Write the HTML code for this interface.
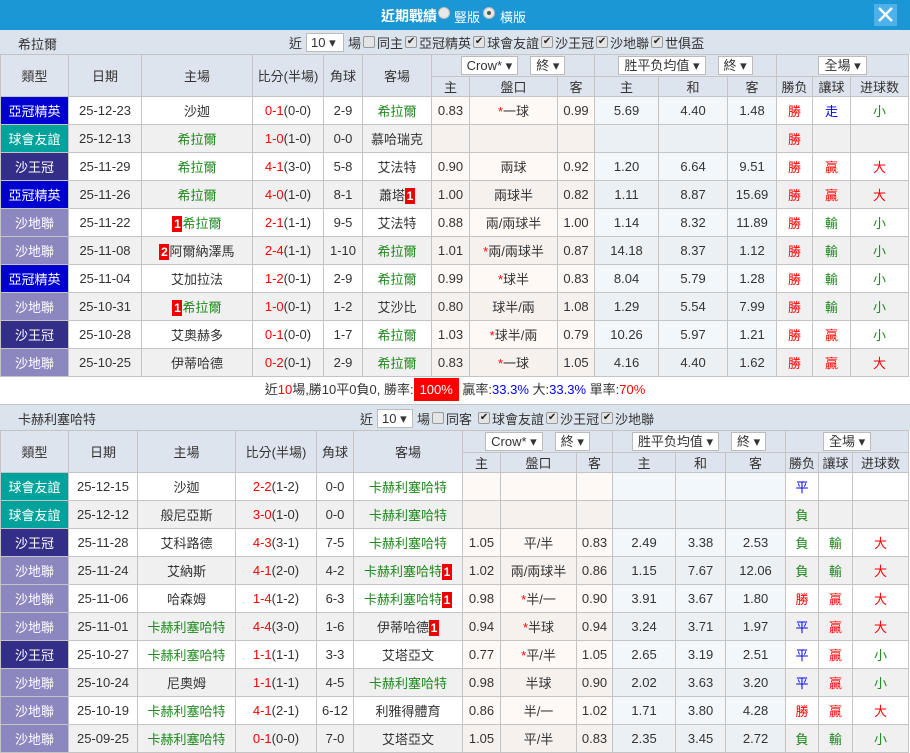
<!DOCTYPE html>
<html><head><meta charset="utf-8"><style>
*{box-sizing:border-box;margin:0;padding:0}
body{width:910px;height:753px;overflow:hidden;background:#fff;font-family:"Liberation Sans","Noto Sans CJK TC",sans-serif;font-size:13px;color:#333;position:relative}
.top{position:absolute;left:0;top:0;width:910px;height:30px;background:#1b97d5;color:#fff}
.top .t{position:absolute;left:381px;top:6px;font-size:14px;font-weight:bold}
.top .r{position:absolute;top:7px;width:12px;height:12px;border-radius:50%;background:#e8e8e8;border:1px solid #bbb}
.top .r.on::after{content:"";position:absolute;left:3px;top:3px;width:4px;height:4px;border-radius:50%;background:#555}
.top .l{position:absolute;top:7px;font-size:13px}
.close{position:absolute;left:874px;top:4px;width:23px;height:22px;background:#4fb1e9}
.sec{position:absolute;left:0;width:910px;height:24px;background:#dbe3ec}
.sec .n{position:absolute;left:18px;top:4px;font-size:13px}
.ctl{position:absolute;top:2px;white-space:nowrap;font-size:13px;display:flex;align-items:center;height:20px}
.sel{display:inline-block;background:#fff;border:1px solid #bbb;height:19px;line-height:17px;padding:0 4px;font-size:13px;margin:0 4px}
.cb{display:inline-block;width:12px;height:12px;border:1px solid #999;border-radius:2px;background:#e4e4e4;margin:0 2px;vertical-align:middle;font-size:10px;line-height:10px;text-align:center;color:#222}
table{position:absolute;left:0;border-collapse:collapse;table-layout:fixed;width:909px}
td{border:1px solid #c4c4c4;text-align:center;height:28px;padding:0;white-space:nowrap;overflow:hidden;font-size:13px}
thead td{background:#dde4ed;height:auto}
tr.h1 td{height:22px}tr.h2 td{height:18px}
tbody tr:nth-child(even) td{background:#f0f0f0}
tbody tr td.o{background:#fff9f6}tbody tr td.x{background:#f1f7fb}
tbody tr:nth-child(even) td.o{background:#f7f1ee}tbody tr:nth-child(even) td.x{background:#eaf0f4}
td.A{background:#0000d0!important;color:#fff}
td.F{background:#00a39b!important;color:#fff}
td.K{background:#332e88!important;color:#fff}
td.L{background:#8d87bf!important;color:#fff}
.g{color:#1e8a1e}.rd{color:#f00}.b{color:#00f}.s{color:#f00}
.bd{display:inline-block;background:#e00;color:#fff;font-weight:bold;width:10px;height:16px;line-height:16px;font-size:12px;vertical-align:middle;text-align:center}
.hs{display:inline-block;background:#fff;border:1px solid #bbb;height:19px;line-height:17px;padding:0 5px;margin:0 6px}
.sum{position:absolute;left:0;top:376px;width:910px;height:28px;text-align:center;line-height:28px;font-size:13px}
</style></head><body>
<div class="top"><span class="t">近期戰績</span><span class="r" style="left:438px"></span><span class="l" style="left:454px">豎版</span><span class="r on" style="left:483px"></span><span class="l" style="left:500px">橫版</span>
<div class="close"><svg width="23" height="22"><path d="M5 4L18 17M18 4L5 17" stroke="#fff" stroke-width="2.4"/></svg></div></div>

<div class="sec" style="top:30px"><span class="n">希拉爾</span>
<div class="ctl" style="left:289px">近<span class="sel" style="width:38px">10 ▾</span>場<span class="cb"></span>同主<span class="cb">✔</span>亞冠精英<span class="cb">✔</span>球會友誼<span class="cb">✔</span>沙王冠<span class="cb">✔</span>沙地聯<span class="cb">✔</span>世俱盃</div></div>

<table style="top:54px">
<colgroup><col style="width:68px"><col style="width:73px"><col style="width:111px"><col style="width:71px"><col style="width:39px"><col style="width:69px"><col style="width:38px"><col style="width:88px"><col style="width:37px"><col style="width:64px"><col style="width:69px"><col style="width:49px"><col style="width:36px"><col style="width:38px"><col style="width:58px"></colgroup>
<thead><tr class="h1"><td rowspan="2">類型</td><td rowspan="2">日期</td><td rowspan="2">主場</td><td rowspan="2">比分(半場)</td><td rowspan="2">角球</td><td rowspan="2">客場</td><td colspan="3"><span class="hs">Crow* ▾</span><span class="hs">終 ▾</span></td><td colspan="3"><span class="hs">胜平负均值 ▾</span><span class="hs">終 ▾</span></td><td colspan="3"><span class="hs">全場 ▾</span></td></tr>
<tr class="h2"><td>主</td><td>盤口</td><td>客</td><td>主</td><td>和</td><td>客</td><td>勝负</td><td>讓球</td><td>进球数</td></tr></thead>
<tbody>
<tr><td class="A">亞冠精英</td><td>25-12-23</td><td>沙迦</td><td><span class="rd">0-1</span>(0-0)</td><td>2-9</td><td class="g">希拉爾</td><td class="o">0.83</td><td class="o"><span class="s">*</span>一球</td><td class="o">0.99</td><td class="x">5.69</td><td class="x">4.40</td><td class="x">1.48</td><td class="rd">勝</td><td class="b">走</td><td class="g">小</td></tr>
<tr><td class="F">球會友誼</td><td>25-12-13</td><td class="g">希拉爾</td><td><span class="rd">1-0</span>(1-0)</td><td>0-0</td><td>慕哈瑞克</td><td class="o"></td><td class="o"></td><td class="o"></td><td class="x"></td><td class="x"></td><td class="x"></td><td class="rd">勝</td><td></td><td></td></tr>
<tr><td class="K">沙王冠</td><td>25-11-29</td><td class="g">希拉爾</td><td><span class="rd">4-1</span>(3-0)</td><td>5-8</td><td>艾法特</td><td class="o">0.90</td><td class="o">兩球</td><td class="o">0.92</td><td class="x">1.20</td><td class="x">6.64</td><td class="x">9.51</td><td class="rd">勝</td><td class="rd">贏</td><td class="rd">大</td></tr>
<tr><td class="A">亞冠精英</td><td>25-11-26</td><td class="g">希拉爾</td><td><span class="rd">4-0</span>(1-0)</td><td>8-1</td><td>蕭塔<span class="bd">1</span></td><td class="o">1.00</td><td class="o">兩球半</td><td class="o">0.82</td><td class="x">1.11</td><td class="x">8.87</td><td class="x">15.69</td><td class="rd">勝</td><td class="rd">贏</td><td class="rd">大</td></tr>
<tr><td class="L">沙地聯</td><td>25-11-22</td><td><span class="bd">1</span><span class="g">希拉爾</span></td><td><span class="rd">2-1</span>(1-1)</td><td>9-5</td><td>艾法特</td><td class="o">0.88</td><td class="o">兩/兩球半</td><td class="o">1.00</td><td class="x">1.14</td><td class="x">8.32</td><td class="x">11.89</td><td class="rd">勝</td><td class="g">輸</td><td class="g">小</td></tr>
<tr><td class="L">沙地聯</td><td>25-11-08</td><td><span class="bd">2</span>阿爾納澤馬</td><td><span class="rd">2-4</span>(1-1)</td><td>1-10</td><td class="g">希拉爾</td><td class="o">1.01</td><td class="o"><span class="s">*</span>兩/兩球半</td><td class="o">0.87</td><td class="x">14.18</td><td class="x">8.37</td><td class="x">1.12</td><td class="rd">勝</td><td class="g">輸</td><td class="g">小</td></tr>
<tr><td class="A">亞冠精英</td><td>25-11-04</td><td>艾加拉法</td><td><span class="rd">1-2</span>(0-1)</td><td>2-9</td><td class="g">希拉爾</td><td class="o">0.99</td><td class="o"><span class="s">*</span>球半</td><td class="o">0.83</td><td class="x">8.04</td><td class="x">5.79</td><td class="x">1.28</td><td class="rd">勝</td><td class="g">輸</td><td class="g">小</td></tr>
<tr><td class="L">沙地聯</td><td>25-10-31</td><td><span class="bd">1</span><span class="g">希拉爾</span></td><td><span class="rd">1-0</span>(0-1)</td><td>1-2</td><td>艾沙比</td><td class="o">0.80</td><td class="o">球半/兩</td><td class="o">1.08</td><td class="x">1.29</td><td class="x">5.54</td><td class="x">7.99</td><td class="rd">勝</td><td class="g">輸</td><td class="g">小</td></tr>
<tr><td class="K">沙王冠</td><td>25-10-28</td><td>艾奧赫多</td><td><span class="rd">0-1</span>(0-0)</td><td>1-7</td><td class="g">希拉爾</td><td class="o">1.03</td><td class="o"><span class="s">*</span>球半/兩</td><td class="o">0.79</td><td class="x">10.26</td><td class="x">5.97</td><td class="x">1.21</td><td class="rd">勝</td><td class="rd">贏</td><td class="g">小</td></tr>
<tr><td class="L">沙地聯</td><td>25-10-25</td><td>伊蒂哈德</td><td><span class="rd">0-2</span>(0-1)</td><td>2-9</td><td class="g">希拉爾</td><td class="o">0.83</td><td class="o"><span class="s">*</span>一球</td><td class="o">1.05</td><td class="x">4.16</td><td class="x">4.40</td><td class="x">1.62</td><td class="rd">勝</td><td class="rd">贏</td><td class="rd">大</td></tr>
</tbody></table>

<div class="sum">近<span class="rd">10</span>場,勝10平0負0, 勝率:<span style="background:#f00;color:#fff;padding:4px 6px">100%</span> 贏率:<span class="b">33.3%</span> 大:<span class="b">33.3%</span> 單率:<span class="rd">70%</span></div>

<div class="sec" style="top:404px;height:26px;border-top:1px solid #c4c4c4"><span class="n">卡赫利塞哈特</span>
<div class="ctl" style="left:360px;top:3px">近<span class="sel" style="width:36px">10 ▾</span>場<span class="cb"></span>同客<span class="cb" style="margin-left:6px">✔</span>球會友誼<span class="cb">✔</span>沙王冠<span class="cb">✔</span>沙地聯</div></div>

<table style="top:430px">
<colgroup><col style="width:68px"><col style="width:69px"><col style="width:98px"><col style="width:81px"><col style="width:37px"><col style="width:109px"><col style="width:38px"><col style="width:76px"><col style="width:36px"><col style="width:63px"><col style="width:50px"><col style="width:60px"><col style="width:33px"><col style="width:34px"><col style="width:56px"></colgroup>
<thead><tr class="h1"><td rowspan="2">類型</td><td rowspan="2">日期</td><td rowspan="2">主場</td><td rowspan="2">比分(半場)</td><td rowspan="2">角球</td><td rowspan="2">客場</td><td colspan="3"><span class="hs">Crow* ▾</span><span class="hs">終 ▾</span></td><td colspan="3"><span class="hs">胜平负均值 ▾</span><span class="hs">終 ▾</span></td><td colspan="3"><span class="hs">全場 ▾</span></td></tr>
<tr class="h2"><td>主</td><td>盤口</td><td>客</td><td>主</td><td>和</td><td>客</td><td>勝负</td><td>讓球</td><td>进球数</td></tr></thead>
<tbody>
<tr><td class="F">球會友誼</td><td>25-12-15</td><td>沙迦</td><td><span class="rd">2-2</span>(1-2)</td><td>0-0</td><td class="g">卡赫利塞哈特</td><td class="o"></td><td class="o"></td><td class="o"></td><td class="x"></td><td class="x"></td><td class="x"></td><td class="b">平</td><td></td><td></td></tr>
<tr><td class="F">球會友誼</td><td>25-12-12</td><td>般尼亞斯</td><td><span class="rd">3-0</span>(1-0)</td><td>0-0</td><td class="g">卡赫利塞哈特</td><td class="o"></td><td class="o"></td><td class="o"></td><td class="x"></td><td class="x"></td><td class="x"></td><td class="g">負</td><td></td><td></td></tr>
<tr><td class="K">沙王冠</td><td>25-11-28</td><td>艾科路德</td><td><span class="rd">4-3</span>(3-1)</td><td>7-5</td><td class="g">卡赫利塞哈特</td><td class="o">1.05</td><td class="o">平/半</td><td class="o">0.83</td><td class="x">2.49</td><td class="x">3.38</td><td class="x">2.53</td><td class="g">負</td><td class="g">輸</td><td class="rd">大</td></tr>
<tr><td class="L">沙地聯</td><td>25-11-24</td><td>艾納斯</td><td><span class="rd">4-1</span>(2-0)</td><td>4-2</td><td><span class="g">卡赫利塞哈特</span><span class="bd">1</span></td><td class="o">1.02</td><td class="o">兩/兩球半</td><td class="o">0.86</td><td class="x">1.15</td><td class="x">7.67</td><td class="x">12.06</td><td class="g">負</td><td class="g">輸</td><td class="rd">大</td></tr>
<tr><td class="L">沙地聯</td><td>25-11-06</td><td>哈森姆</td><td><span class="rd">1-4</span>(1-2)</td><td>6-3</td><td><span class="g">卡赫利塞哈特</span><span class="bd">1</span></td><td class="o">0.98</td><td class="o"><span class="s">*</span>半/一</td><td class="o">0.90</td><td class="x">3.91</td><td class="x">3.67</td><td class="x">1.80</td><td class="rd">勝</td><td class="rd">贏</td><td class="rd">大</td></tr>
<tr><td class="L">沙地聯</td><td>25-11-01</td><td class="g">卡赫利塞哈特</td><td><span class="rd">4-4</span>(3-0)</td><td>1-6</td><td>伊蒂哈德<span class="bd">1</span></td><td class="o">0.94</td><td class="o"><span class="s">*</span>半球</td><td class="o">0.94</td><td class="x">3.24</td><td class="x">3.71</td><td class="x">1.97</td><td class="b">平</td><td class="rd">贏</td><td class="rd">大</td></tr>
<tr><td class="K">沙王冠</td><td>25-10-27</td><td class="g">卡赫利塞哈特</td><td><span class="rd">1-1</span>(1-1)</td><td>3-3</td><td>艾塔亞文</td><td class="o">0.77</td><td class="o"><span class="s">*</span>平/半</td><td class="o">1.05</td><td class="x">2.65</td><td class="x">3.19</td><td class="x">2.51</td><td class="b">平</td><td class="rd">贏</td><td class="g">小</td></tr>
<tr><td class="L">沙地聯</td><td>25-10-24</td><td>尼奧姆</td><td><span class="rd">1-1</span>(1-1)</td><td>4-5</td><td class="g">卡赫利塞哈特</td><td class="o">0.98</td><td class="o">半球</td><td class="o">0.90</td><td class="x">2.02</td><td class="x">3.63</td><td class="x">3.20</td><td class="b">平</td><td class="rd">贏</td><td class="g">小</td></tr>
<tr><td class="L">沙地聯</td><td>25-10-19</td><td class="g">卡赫利塞哈特</td><td><span class="rd">4-1</span>(2-1)</td><td>6-12</td><td>利雅得體育</td><td class="o">0.86</td><td class="o">半/一</td><td class="o">1.02</td><td class="x">1.71</td><td class="x">3.80</td><td class="x">4.28</td><td class="rd">勝</td><td class="rd">贏</td><td class="rd">大</td></tr>
<tr><td class="L">沙地聯</td><td>25-09-25</td><td class="g">卡赫利塞哈特</td><td><span class="rd">0-1</span>(0-0)</td><td>7-0</td><td>艾塔亞文</td><td class="o">1.05</td><td class="o">平/半</td><td class="o">0.83</td><td class="x">2.35</td><td class="x">3.45</td><td class="x">2.72</td><td class="g">負</td><td class="g">輸</td><td class="g">小</td></tr>
</tbody></table>
</body></html>
